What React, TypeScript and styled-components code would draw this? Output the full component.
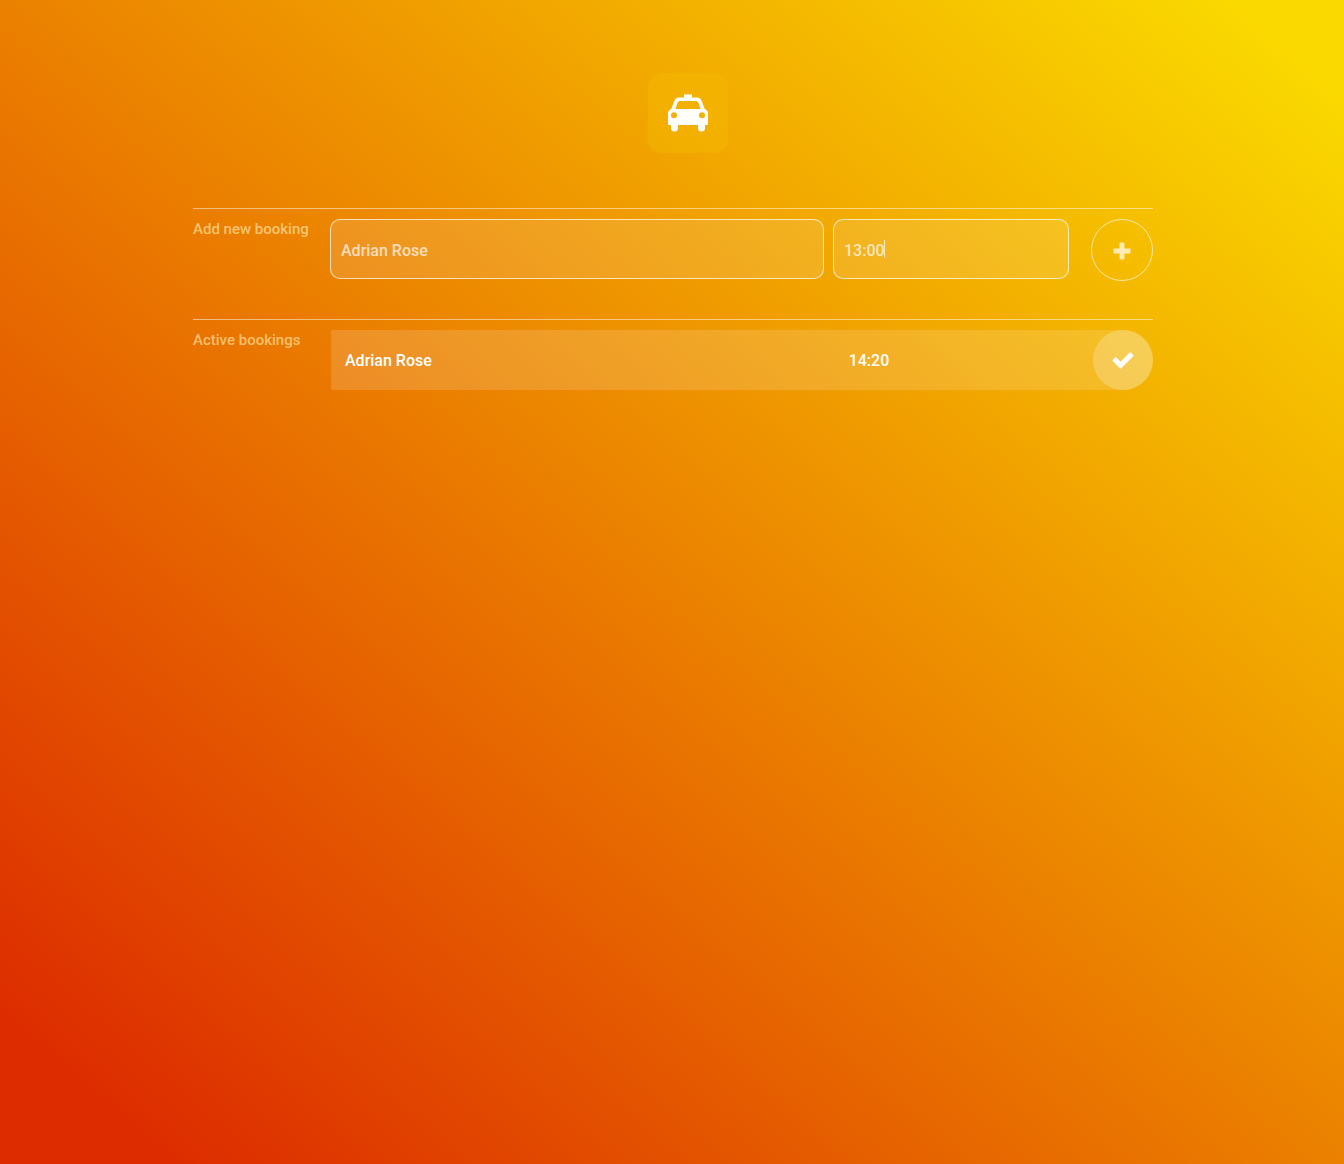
import React, { useState } from 'react';
import styled, { createGlobalStyle } from 'styled-components';

const GlobalStyle = createGlobalStyle`
  *, *::before, *::after { box-sizing: border-box; }
  body {
    margin: 0;
    min-height: 100vh;
    background: linear-gradient(to top right, #dd2c00 6%, #fad900 96%) no-repeat;
    color: #fff;
    font-family: Roboto, "Liberation Sans", sans-serif;
    font-size: 16px;
    line-height: 20px;
  }
`;

const Page = styled.main`
  width: 100%;
  max-width: 962px;
  margin: 0 auto;
  padding-top: 73px;
  padding-left: 2px;
`;

const Header = styled.header`
  display: flex;
  justify-content: center;
  padding-left: 30px;
  margin-bottom: 55px;
`;

const Logo = styled.div`
  display: grid;
  place-items: center;
  width: 80px;
  height: 80px;
  border-radius: 14px;
  background: rgba(243, 182, 0, 0.6);
`;

const Section = styled.section`
  display: grid;
  grid-template-columns: 137px minmax(0, 1fr);
  padding-top: 10px;
  padding-bottom: 38px;
  border-top: 1px solid rgba(255, 255, 255, 0.5);
`;

const SectionTitle = styled.h2`
  margin: 0;
  font-size: 15px;
  font-weight: 500;
  color: rgba(255, 235, 175, 0.65);
`;

const BookingForm = styled.form`
  display: grid;
  grid-template-columns: minmax(0, 494fr) minmax(0, 249fr) 62px;
  column-gap: 9px;
`;

const Field = styled.label`
  position: relative;
  display: block;
  height: 60px;
`;

const TimeField = styled(Field)`
  margin-right: 13px;
`;

const Input = styled.input`
  width: 100%;
  height: 60px;
  padding: 2px 10px 0;
  border: 1px solid rgba(255, 255, 255, 0.7);
  border-radius: 10px;
  outline: none;
  background: rgba(255, 255, 255, 0.12);
  color: rgba(255, 255, 255, 0.7);
  font: 500 16px/20px Roboto, "Liberation Sans", sans-serif;
`;

const Caret = styled.span`
  position: absolute;
  top: 21px;
  left: 51px;
  width: 1px;
  height: 18px;
  background: rgba(255, 255, 255, 0.7);
`;

const RoundButton = styled.button<{ $outlined?: boolean }>`
  display: grid;
  place-items: center;
  width: ${(p) => (p.$outlined ? 62 : 60)}px;
  height: ${(p) => (p.$outlined ? 62 : 60)}px;
  padding: ${(p) => (p.$outlined ? '2px 0 0' : '0')};
  border: ${(p) => (p.$outlined ? '1px solid rgba(255, 255, 255, 0.65)' : '0')};
  border-radius: 50%;
  background: ${(p) => (p.$outlined ? 'transparent' : 'rgba(255, 255, 255, 0.22)')};
  color: ${(p) => (p.$outlined ? 'rgba(255, 255, 255, 0.7)' : '#fff')};
  cursor: pointer;
`;

const BookingList = styled.ul`
  margin: 0 0 0 1px;
  padding: 0;
  list-style: none;
`;

const Booking = styled.li`
  display: grid;
  grid-template-columns: minmax(0, 494fr) minmax(0, 249fr) 60px;
  column-gap: 9px;
  align-items: center;
  height: 60px;
  border-radius: 0 30px 30px 0;
  background: rgba(255, 255, 255, 0.15);
  font-weight: 500;
`;

const Cell = styled.span`
  padding: 2px 0 0 14px;
`;

const TaxiIcon = () => (
  <svg width="40" height="38" viewBox="0 0 40 38" fill="currentColor" aria-hidden="true">
    <path
      fillRule="evenodd"
      d="M16 0.500h8v3h4.500q4 0 5.200 3.400l3 8.100q3.300 1.200 3.300 4.500v11.500h-3v3a3.500 3.500 0 0 1-7 0V31H10v3a3.500 3.500 0 0 1-7 0V31H0V19.500Q0 16.200 3.300 15l3-8.100Q7.500 3.500 11.500 3.500H16zM11.800 7Q10.200 7 9.600 8.600L7.400 15h25.200l-2.200-6.400Q29.800 7 28.200 7zM6 18.200a3 3 0 1 0 0 6a3 3 0 0 0 0-6zM34 18.200a3 3 0 1 0 0 6a3 3 0 0 0 0-6z"
    />
  </svg>
);

const PlusIcon = () => (
  <svg width="22" height="22" viewBox="0 0 18 18" fill="currentColor" aria-hidden="true">
    <path d="M7.600 2h2.800q.6 0 .6.600V7h4.400q.6 0 .6.600v2.800q0 .6-.6.600H11v4.400q0 .6-.6.600H7.600q-.6 0-.6-.6V11H2.600q-.6 0-.6-.6V7.600q0-.6.600-.6H7V2.600q0-.6.600-.6z" />
  </svg>
);

const CheckIcon = () => (
  <svg width="24" height="24" viewBox="0 0 1792 1792" fill="currentColor" aria-hidden="true">
    <path d="M1671 566q0 40-28 68l-724 724-136 136q-28 28-68 28t-68-28l-136-136-362-362q-28-28-28-68t28-68l136-136q28-28 68-28t68 28l294 295 656-657q28-28 68-28t68 28l136 136q28 28 28 68z" />
  </svg>
);

export default function App() {
  const [name, setName] = useState('Adrian Rose');
  const [time, setTime] = useState('13:00');
  const [bookings, setBookings] = useState([{ name: 'Adrian Rose', time: '14:20' }]);

  const addBooking = (event: React.FormEvent) => {
    event.preventDefault();
    setBookings([...bookings, { name, time }]);
  };

  return (
    <>
      <GlobalStyle />
      <Page>
        <Header>
          <Logo>
            <TaxiIcon />
          </Logo>
        </Header>
        <Section>
          <SectionTitle>Add new booking</SectionTitle>
          <BookingForm onSubmit={addBooking}>
            <Field>
              <Input aria-label="Name" value={name} onChange={(e) => setName(e.target.value)} />
            </Field>
            <TimeField>
              <Input aria-label="Time" value={time} onChange={(e) => setTime(e.target.value)} />
              <Caret />
            </TimeField>
            <RoundButton $outlined type="submit" aria-label="Add booking">
              <PlusIcon />
            </RoundButton>
          </BookingForm>
        </Section>
        <Section>
          <SectionTitle>Active bookings</SectionTitle>
          <BookingList>
            {bookings.map((booking, index) => (
              <Booking key={index}>
                <Cell>{booking.name}</Cell>
                <Cell>{booking.time}</Cell>
                <RoundButton
                  type="button"
                  aria-label="Complete booking"
                  onClick={() => setBookings(bookings.filter((_, i) => i !== index))}
                >
                  <CheckIcon />
                </RoundButton>
              </Booking>
            ))}
          </BookingList>
        </Section>
      </Page>
    </>
  );
}
